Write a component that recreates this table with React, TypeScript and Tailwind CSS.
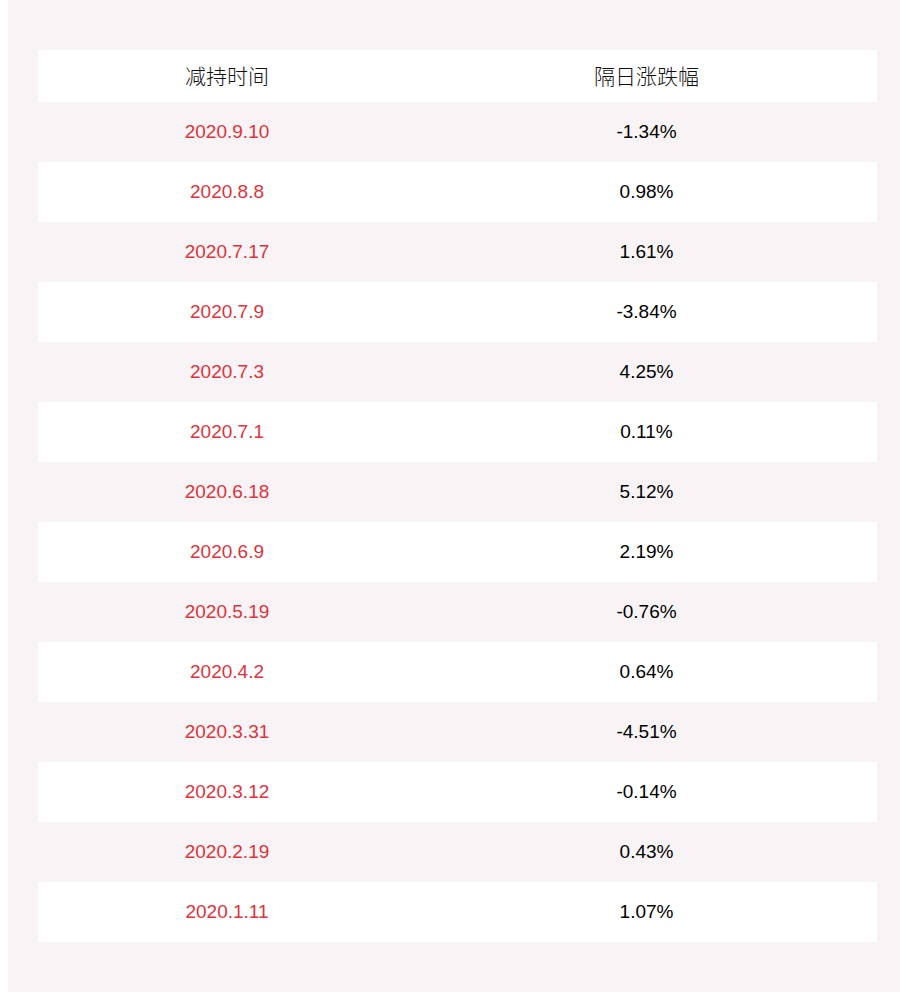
import React from "react";

const rows: [string, string][] = [
  ["2020.9.10", "-1.34%"],
  ["2020.8.8", "0.98%"],
  ["2020.7.17", "1.61%"],
  ["2020.7.9", "-3.84%"],
  ["2020.7.3", "4.25%"],
  ["2020.7.1", "0.11%"],
  ["2020.6.18", "5.12%"],
  ["2020.6.9", "2.19%"],
  ["2020.5.19", "-0.76%"],
  ["2020.4.2", "0.64%"],
  ["2020.3.31", "-4.51%"],
  ["2020.3.12", "-0.14%"],
  ["2020.2.19", "0.43%"],
  ["2020.1.11", "1.07%"],
];

export default function App() {
  return (
    <div className="w-[900px] h-[992px] bg-white pl-[8px]">
      <div className="h-full bg-[#f8f4f5] pt-[50px] pl-[30px] pr-[23px]">
        <div className="flex flex-col">
          <div className="flex h-[52px] bg-white items-center text-[21px] font-light text-[#111] [font-family:'Noto_Sans_CJK_SC',sans-serif]">
            <div className="w-[378px] text-center">减持时间</div>
            <div className="flex-1 text-center">隔日涨跌幅</div>
          </div>
          {rows.map(([d, v], i) => (
            <div
              key={i}
              className={`flex h-[60px] items-center text-[19px] [font-family:'Liberation_Sans',sans-serif] ${
                i % 2 === 0 ? "bg-[#f8f4f5]" : "bg-white"
              }`}
            >
              <div className="w-[378px] text-center text-[#e0323c]">{d}</div>
              <div className="flex-1 text-center text-black">{v}</div>
            </div>
          ))}
        </div>
      </div>
    </div>
  );
}
